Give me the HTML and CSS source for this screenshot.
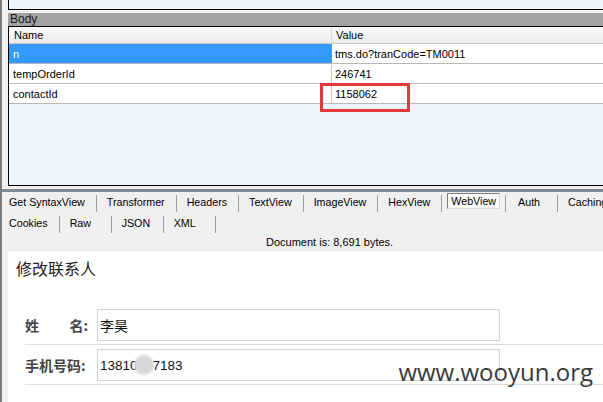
FILE: index.html
```html
<!DOCTYPE html>
<html lang="zh">
<head>
<meta charset="utf-8">
<title>Fiddler WebView</title>
<link rel="stylesheet" href="styles.css">
</head>
<body>
<div class="app">
  <div class="req-top"></div>
  <div class="body-bar">Body</div>
  <div class="grid">
    <div class="grid-row head">
      <div class="c1">Name</div>
      <div class="c2">Value</div>
    </div>
    <div class="grid-row">
      <div class="c1 sel">n</div>
      <div class="c2">tms.do?tranCode=TM0011</div>
    </div>
    <div class="grid-row">
      <div class="c1">tempOrderId</div>
      <div class="c2">246741</div>
    </div>
    <div class="grid-row">
      <div class="c1">contactId</div>
      <div class="c2">1158062</div>
    </div>
    <div class="mark"></div>
  </div>
  <div class="splitter"></div>
  <div class="tabs">
    <div class="tab-row">
      <div class="tab first">Get SyntaxView</div>
      <div class="tab">Transformer</div>
      <div class="tab">Headers</div>
      <div class="tab">TextView</div>
      <div class="tab">ImageView</div>
      <div class="tab">HexView</div>
      <div class="tab active"><span class="tab-box">WebView</span></div>
      <div class="tab auth">Auth</div>
      <div class="tab last">Caching</div>
    </div>
    <div class="tab-row">
      <div class="tab first">Cookies</div>
      <div class="tab">Raw</div>
      <div class="tab">JSON</div>
      <div class="tab">XML</div>
    </div>
  </div>
  <div class="doc-info">Document is: 8,691 bytes.</div>
  <div class="web">
    <h1 class="page-title">修改联系人</h1>
    <div class="form">
      <div class="form-row">
        <div class="label spread"><span>姓</span><span>名:</span></div>
        <div class="input">李昊</div>
      </div>
      <div class="form-row">
        <div class="label">手机号码:</div>
        <div class="input phone">13810<span class="blur"></span>7183</div>
      </div>
    </div>
    <div class="watermark">www.wooyun.org</div>
  </div>
</div>
</body>
</html>
```

FILE: styles.css
```css
* { box-sizing: border-box; }

html, body {
  margin: 0;
  padding: 0;
}

body {
  width: 603px;
  height: 402px;
  overflow: hidden;
  background: #f0f0f0;
  font-family: "Liberation Sans", Arial, sans-serif;
  font-size: 11px;
  color: #000;
}

.app {
  height: 402px;
  border-left: 2px solid #7c7c7c;
  background: #f0f0f0;
  overflow: hidden;
}

/* ---------- request body inspector ---------- */
.req-top {
  margin-left: 6px;
  height: 10px;
  background: #edf5fd;
  border-left: 1px solid #000;
  border-bottom: 1px solid #000;
}

.body-bar {
  margin: 3px 0 0 6px;
  height: 13px;
  line-height: 13px;
  padding-left: 2px;
  background: #a3a3a3;
  font-size: 12px;
  color: #1a1a1a;
}

.grid {
  position: relative;
  margin-left: 6px;
  height: 160px;
  background: #edf5fd;
  border-top: 1px solid #000;
  border-left: 1px solid #000;
  border-bottom: 1px solid #000;
}

.grid-row {
  display: flex;
  height: 20px;
  border-bottom: 1px solid #b8b8b8;
  background: #fff;
}

.grid-row.head {
  height: 17px;
  background: linear-gradient(#fbfbfb, #ececec);
  border-bottom: 1px solid #c8c8c8;
}

.c1 {
  width: 323px;
  flex: none;
  padding-left: 4px;
  border-right: 1px solid #c4c4c4;
  display: flex;
  align-items: center;
}

.c2 {
  flex: 1;
  padding-left: 3px;
  display: flex;
  align-items: center;
}

.head .c1 { padding-left: 5px; border-right-color: #d8d8d8; }
.head .c2 { padding-left: 4px; }

.c1.sel {
  background: #3399ff;
  color: #fff;
  border-right-color: #3399ff;
}

.mark {
  position: absolute;
  left: 311px;
  top: 56px;
  width: 90px;
  height: 29px;
  border: 3px solid #e23a3c;
}

.splitter {
  margin-top: 3px;
  height: 3px;
  background: #7d8a97;
}

/* ---------- response tabs ---------- */
.tabs {
  font-size: 10.7px;
}

.tab-row {
  display: flex;
  height: 21px;
}

.tab {
  min-width: 52px;
  height: 17px;
  margin-top: 3px;
  line-height: 15px;
  padding: 0 11px 0 10px;
  border-right: 1px solid #a0a0a0;
  white-space: nowrap;
  flex: none;
}

.tab.first { padding-left: 7px; }

.tab.active {
  padding: 0 5px;
}

.tab.auth {
  padding-left: 12px;
}

.tab.last {
  border-right: none;
}

.tab-box {
  display: block;
  margin-top: -2px;
  height: 16px;
  line-height: 14px;
  padding: 0 3px;
  background: #fbfbfb;
  border: 1px solid #d6d6d6;
  border-top-color: #7a7a7a;
  border-left-color: #7a7a7a;
}

.doc-info {
  height: 16px;
  line-height: 16px;
  padding-left: 264px;
}

/* ---------- rendered web page ---------- */
.web {
  position: relative;
  margin-left: 6px;
  height: 160px;
  background: #fff;
  border-top: 1px solid #e6e6e6;
  padding-top: 7px;
  font-family: "Noto Sans CJK SC", "Liberation Sans", sans-serif;
}

.page-title {
  margin: 0;
  padding-left: 8px;
  font-size: 16px;
  font-weight: normal;
  line-height: 20px;
  color: #222;
}

.form {
  margin: 27px 0 0 17px;
}

.form-row {
  display: flex;
  align-items: center;
  padding: 4px 0 3px;
  border-bottom: 1px solid #dcdcdc;
}

.label {
  width: 72px;
  flex: none;
  font-size: 14px;
  font-weight: bold;
  color: #444;
}

.label.spread {
  display: flex;
  justify-content: space-between;
  padding-right: 9px;
}

.input {
  position: relative;
  width: 403px;
  height: 32px;
  border: 1px solid #d4d4d4;
  padding-left: 2px;
  display: flex;
  align-items: center;
  font-size: 14px;
  color: #111;
}

.input.phone {
  font-family: "Liberation Sans", Arial, sans-serif;
  font-size: 13.5px;
}

.blur {
  position: relative;
  display: inline-block;
  width: 15px;
  height: 14px;
}

.blur::before {
  content: "";
  position: absolute;
  left: -4px;
  top: -3px;
  width: 20px;
  height: 20px;
  border-radius: 50%;
  background: #d8d8d8;
  filter: blur(1px);
}

.watermark {
  position: absolute;
  right: 10px;
  top: 109px;
  font-family: "Open Sans", "Liberation Sans", sans-serif;
  font-size: 24px;
  line-height: 24px;
  color: #3a3a3a;
  white-space: nowrap;
}
```
